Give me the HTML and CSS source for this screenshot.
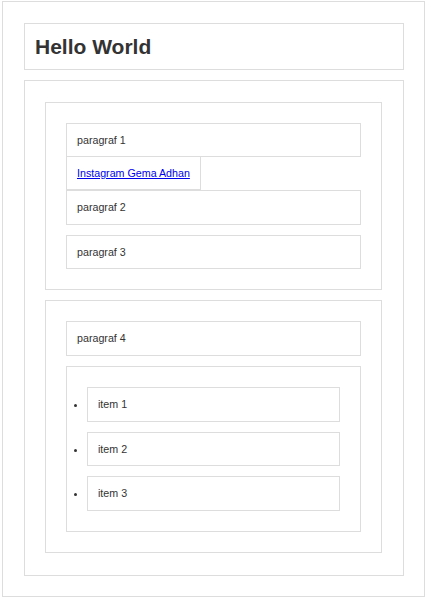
FILE: index.html
```html
<!DOCTYPE html>
<html lang="id">
<head>
<meta charset="utf-8">
<title>Hello World</title>
<link rel="stylesheet" href="styles.css">
</head>
<body>
<div class="page">
  <h1 class="title">Hello World</h1>
  <div class="main">
    <div class="section">
      <p class="box">paragraf 1</p>
      <a class="link" href="#">Instagram Gema Adhan</a>
      <p class="box">paragraf 2</p>
      <p class="box">paragraf 3</p>
    </div>
    <div class="section">
      <p class="box">paragraf 4</p>
      <ul class="list">
        <li class="item">item 1</li>
        <li class="item">item 2</li>
        <li class="item">item 3</li>
      </ul>
    </div>
  </div>
</div>
</body>
</html>
```

FILE: styles.css
```css
html, body {
  margin: 0;
  padding: 0;
  background: #fff;
}

body {
  font-family: "Liberation Sans", Arial, sans-serif;
  color: #333;
}

.page {
  margin: 1px 2px 0 2px;
  border: 1px solid #ddd;
  padding: 21px 20px 20px 21px;
}

.title {
  margin: 0 0 10px 0;
  border: 1px solid #ddd;
  padding: 0 10px;
  height: 45px;
  line-height: 45px;
  font-size: 21px;
  font-weight: bold;
  color: #333;
}

.main {
  border: 1px solid #ddd;
  padding: 20.5px 21px 21.5px 20px;
}

.section {
  border: 1px solid #ddd;
  padding: 20px;
  font-size: 10.7px;
  line-height: 12.7px;
}

.section + .section {
  margin-top: 10px;
}

.box {
  margin: 10px 0;
  border: 1px solid #ddd;
  padding: 10px;
}

.section > .box:first-child {
  margin-top: 0;
}

.section > :last-child {
  margin-bottom: 0;
}

.link {
  border: 1px solid #ddd;
  padding: 10px;
  color: #0000ee;
  text-decoration: underline;
}

.list {
  margin: 10px 0 0 0;
  border: 1px solid #ddd;
  padding: 20px;
}

.item {
  margin: 10px 0;
  border: 1px solid #ddd;
  padding: 10px;
}

.item:first-child {
  margin-top: 0;
}

.item:last-child {
  margin-bottom: 0;
}
```
